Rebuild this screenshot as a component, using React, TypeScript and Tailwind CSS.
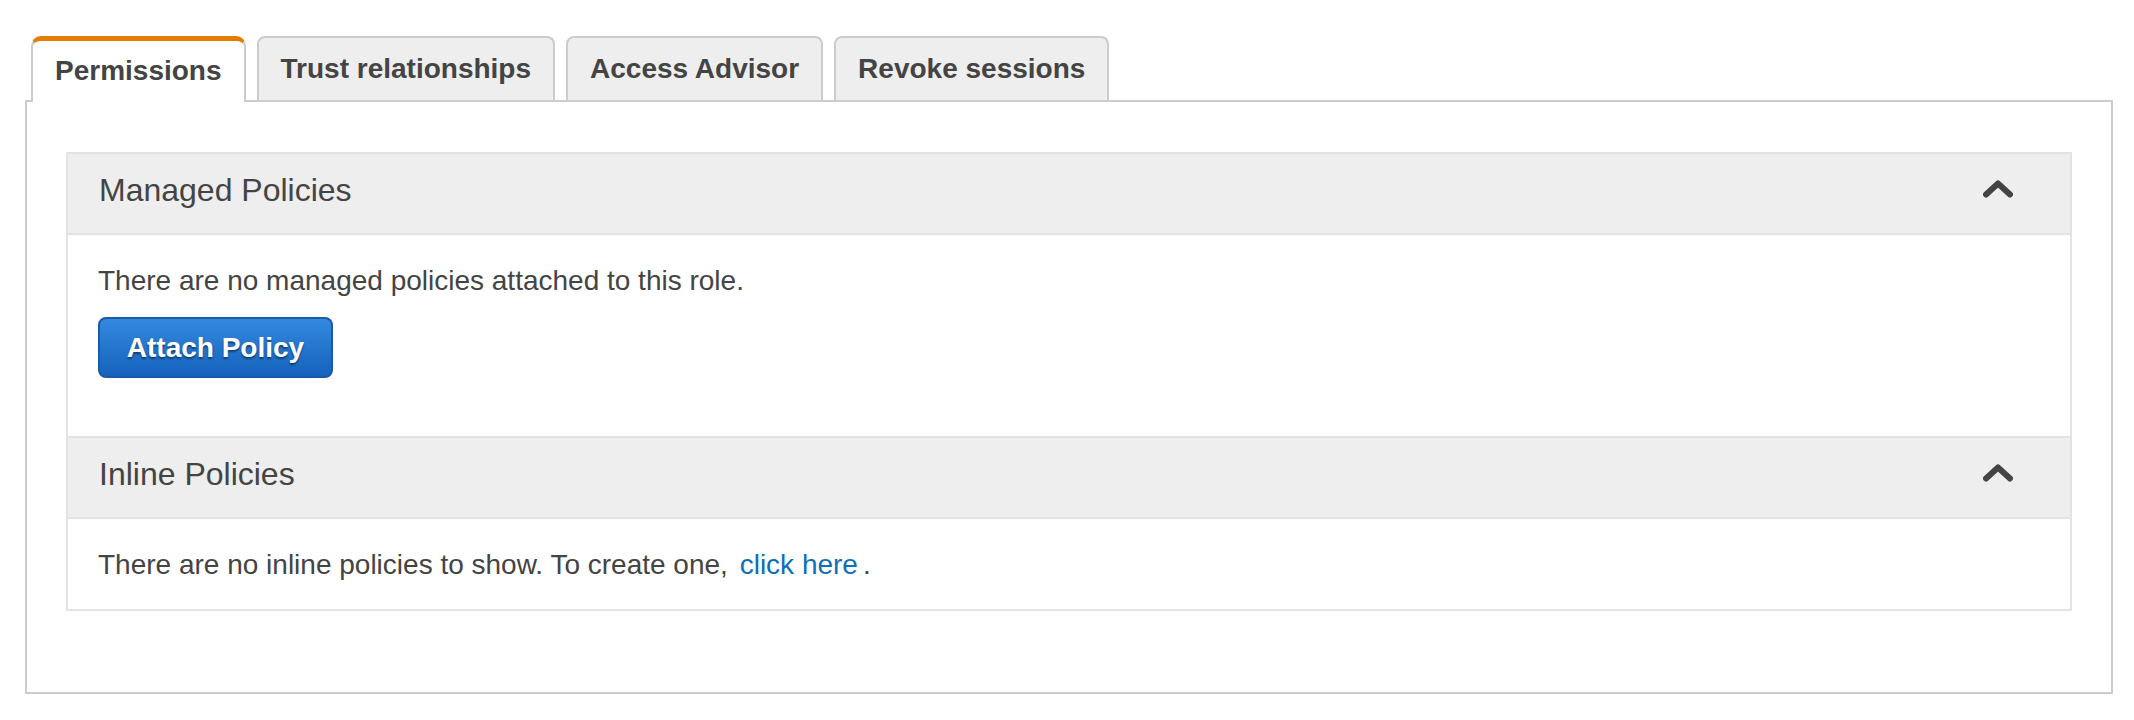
import { useState } from 'react';

const tabs = ['Permissions', 'Trust relationships', 'Access Advisor', 'Revoke sessions'];

function Chevron() {
  return (
    <svg width="30" height="19" viewBox="0 0 30 19" className="text-[#444]">
      <polyline
        points="3,15.5 15,4.5 27,15.5"
        fill="none"
        stroke="currentColor"
        strokeWidth="6"
        strokeLinecap="round"
        strokeLinejoin="round"
      />
    </svg>
  );
}

function SectionHeader({ title, top }: { title: string; top?: boolean }) {
  return (
    <div
      className={
        'flex h-[79px] items-center justify-between bg-[#eeeeee] pl-[31px] pr-[57px] border-b-2 border-[#e3e3e3] box-content ' +
        (top ? 'border-t-2' : '')
      }
    >
      <span className="text-[32px] leading-[36px] text-[#444] pb-[8px]">{title}</span>
      <div className="pb-[10px]">
        <Chevron />
      </div>
    </div>
  );
}

export default function App() {
  const [active, setActive] = useState(0);

  return (
    <div className="h-[720px] w-full bg-white font-['Liberation_Sans',Arial,sans-serif] text-[#444]">
      <div className="pt-[36px] pl-[25px] pr-[21px]">
        {/* tabs */}
        <div className="relative z-10 -mb-[2px] flex items-start gap-[11px] pl-[6px]">
          {tabs.map((tab, i) =>
            i === active ? (
              <button
                key={tab}
                onClick={() => setActive(i)}
                className="flex h-[66px] items-center rounded-t-[10px] border-x-2 border-t-[5px] border-x-[#cccccc] border-t-[#e57b00] bg-white px-[22px] pb-[2px] text-[28px] font-bold leading-none text-[#444]"
              >
                {tab}
              </button>
            ) : (
              <button
                key={tab}
                onClick={() => setActive(i)}
                className="flex h-[64px] items-center rounded-t-[8px] border-x-2 border-t-2 border-[#cccccc] bg-[#eeeeee] px-[22px] text-[28px] font-bold leading-none text-[#444]"
              >
                {tab}
              </button>
            )
          )}
        </div>

        {/* panel */}
        <div className="border-2 border-[#cccccc] px-[39px] pt-[50px] pb-[81px]">
          <div className="border-2 border-[#e3e3e3]">
            <SectionHeader title="Managed Policies" />
            <div className="h-[201px] px-[30px] pt-[30px]">
              <p className="text-[28px] leading-[32px]">There are no managed policies attached to this role.</p>
              <button className="mt-[20px] flex h-[61px] w-[235px] items-center justify-center rounded-[8px] border-2 border-[#1a5aa6] bg-gradient-to-b from-[#3489de] to-[#1462be] text-[28px] font-bold text-white [text-shadow:0_2px_2px_rgba(0,0,0,0.45)]">
                Attach Policy
              </button>
            </div>
            <SectionHeader title="Inline Policies" top />
            <div className="h-[90px] px-[30px] pt-[30px]">
              <p className="text-[28px] leading-[32px]">
                There are no inline policies to show. To create one,{' '}
                <a href="#" className="ml-[4px] text-[#0b6fba]">
                  click here
                </a>
                <span className="ml-[5px]">.</span>
              </p>
            </div>
          </div>
        </div>
      </div>
    </div>
  );
}
